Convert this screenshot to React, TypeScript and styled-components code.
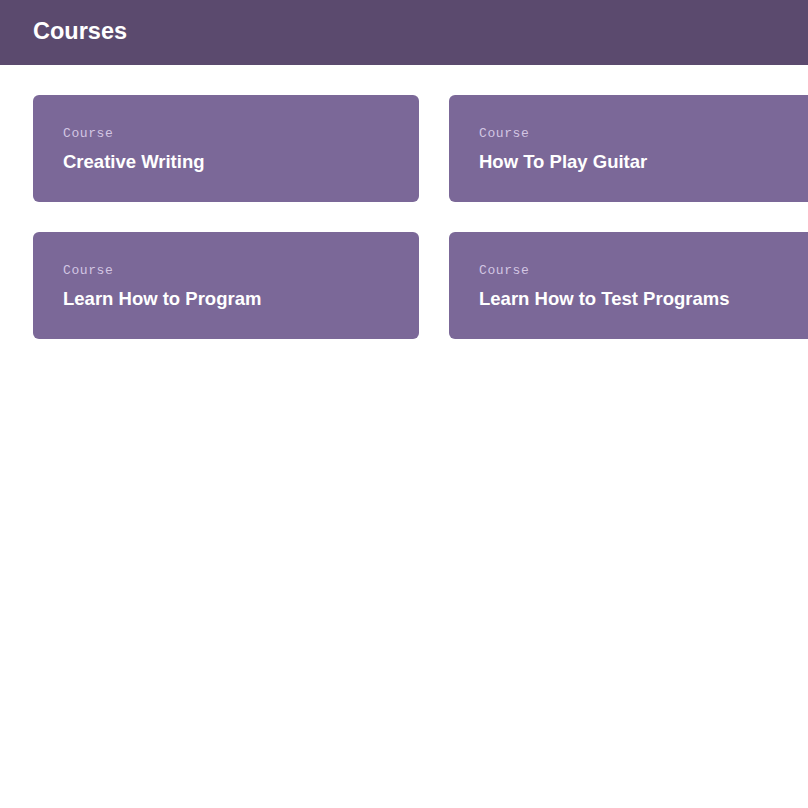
import styled, { createGlobalStyle } from 'styled-components';

const courses = [
  'Creative Writing',
  'How To Play Guitar',
  'Learn How to Program',
  'Learn How to Test Programs',
];

export default function App() {
  return (
    <>
      <GlobalStyle />
      <Header>
        <Title>Courses</Title>
      </Header>
      <Grid>
        {courses.map((name) => (
          <Card key={name}>
            <Label>Course</Label>
            <CardTitle>{name}</CardTitle>
          </Card>
        ))}
      </Grid>
    </>
  );
}

const GlobalStyle = createGlobalStyle`
  html, body {
    margin: 0;
    background: #ffffff;
    overflow: hidden;
    font-family: "Liberation Sans", Arial, sans-serif;
  }
`;

const Header = styled.header`
  display: flex;
  align-items: center;
  height: 65px;
  padding: 0 33px;
  background: #5b4a6e;
  box-sizing: border-box;
`;

const Title = styled.h1`
  margin: 0;
  color: #ffffff;
  font-size: 23.5px;
  font-weight: bold;
  padding-bottom: 2px;
`;

const Grid = styled.main`
  display: grid;
  grid-template-columns: repeat(2, 386px);
  gap: 30px;
  padding: 30px 33px;
`;

const Card = styled.div`
  display: flex;
  flex-direction: column;
  gap: 9px;
  padding: 31px 30px 29px;
  background: #7b6898;
  border-radius: 6px;
`;

const Label = styled.span`
  font-family: "Liberation Mono", "Courier New", monospace;
  font-size: 13px;
  letter-spacing: 0.6px;
  line-height: 16px;
  color: #d3c6e3;
`;

const CardTitle = styled.h2`
  margin: 0;
  font-size: 18.5px;
  line-height: 22px;
  font-weight: bold;
  color: #ffffff;
`;
